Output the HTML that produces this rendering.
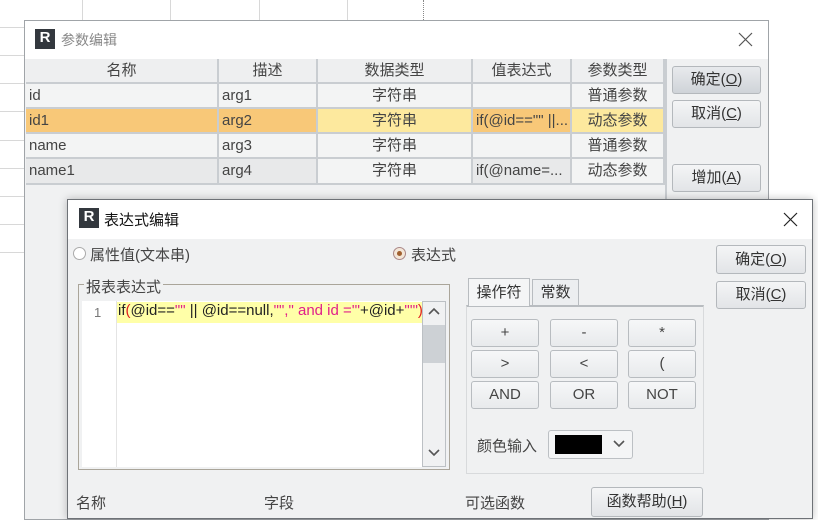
<!DOCTYPE html>
<html><head><meta charset="utf-8"><style>
*{box-sizing:border-box;margin:0;padding:0}
body{width:818px;height:516px;overflow:hidden;background:#fff;position:relative;font-family:"Liberation Sans","Noto Sans CJK SC",sans-serif;font-size:14px;color:#333}
.a{position:absolute}
.vl{position:absolute;top:0;width:1px;height:20px;background:#d8d8d8}
.hl{position:absolute;left:0;width:25px;height:1px;background:#d8d8d8}
.btn{position:absolute;border:1px solid #b4b8bc;border-radius:3px;background:linear-gradient(#f4f5f6,#e2e4e7);text-align:center;color:#333;font-size:15px}
.cell{position:absolute;border-right:2px solid #c9cdd1;border-bottom:2px solid #c9cdd1;padding-left:3px;white-space:nowrap;overflow:hidden;line-height:23px;color:#444;font-size:15px}
.c{text-align:center;padding-left:0}
.ob{position:absolute;width:68px;height:28px;border:1px solid #b8bcc0;border-radius:3px;background:linear-gradient(#f6f7f8,#e8eaec);text-align:center;line-height:26px;color:#444;font-size:15px}
u{text-decoration:underline}
</style></head><body>
<div class="vl" style="left:82px"></div><div class="vl" style="left:170px"></div><div class="vl" style="left:259px"></div><div class="vl" style="left:347px"></div>
<div class="a" style="left:423px;top:0;height:20px;border-left:1px dotted #888"></div>
<div class="hl" style="top:27px"></div><div class="hl" style="top:55px"></div><div class="hl" style="top:83px"></div><div class="hl" style="top:111px"></div><div class="hl" style="top:140px"></div><div class="hl" style="top:168px"></div><div class="hl" style="top:196px"></div><div class="hl" style="top:224px"></div><div class="hl" style="top:252px"></div>

<!-- dialog 1 -->
<div class="a" style="left:24px;top:20px;width:745px;height:500px;border:1px solid #a0a4a8;background:#f0f1f2"></div>
<div class="a" style="left:25px;top:21px;width:743px;height:38px;background:#fff"></div>
<div class="a" style="left:35px;top:29px;width:20px;height:20px;background:#33383e;color:#fff;font-weight:bold;font-size:15px;line-height:18px;text-align:center">R</div>
<div class="a" style="left:61px;top:30px;color:#888;font-size:14px">参数编辑</div>
<svg class="a" style="left:738px;top:32px" width="15" height="15"><path d="M1 1L14 14M14 1L1 14" stroke="#555" stroke-width="1.2"/></svg>
<div class="a" style="left:26px;top:59px;width:639px;height:126px;background:#f3f4f4"></div>
<div class="cell c" style="left:26px;top:59px;width:193px;height:25px;background:#eeeff0">名称</div>
<div class="cell c" style="left:219px;top:59px;width:99px;height:25px;background:#eeeff0">描述</div>
<div class="cell c" style="left:318px;top:59px;width:155px;height:25px;background:#eeeff0">数据类型</div>
<div class="cell c" style="left:473px;top:59px;width:99px;height:25px;background:#eeeff0">值表达式</div>
<div class="cell c" style="left:572px;top:59px;width:93px;height:25px;background:#eeeff0">参数类型</div>

<div class="cell" style="left:26px;top:84px;width:193px;height:25px">id</div>
<div class="cell" style="left:219px;top:84px;width:99px;height:25px">arg1</div>
<div class="cell c" style="left:318px;top:84px;width:155px;height:25px">字符串</div>
<div class="cell" style="left:473px;top:84px;width:99px;height:25px"></div>
<div class="cell c" style="left:572px;top:84px;width:93px;height:25px">普通参数</div>

<div class="cell" style="left:26px;top:109px;width:193px;height:25px;background:#f8c878">id1</div>
<div class="cell" style="left:219px;top:109px;width:99px;height:25px;background:#f8c878">arg2</div>
<div class="cell c" style="left:318px;top:109px;width:155px;height:25px;background:#fde99e">字符串</div>
<div class="cell" style="left:473px;top:109px;width:99px;height:25px;background:#f8c878">if(@id=="" ||...</div>
<div class="cell c" style="left:572px;top:109px;width:93px;height:25px;background:#fde99e">动态参数</div>

<div class="cell" style="left:26px;top:134px;width:193px;height:25px">name</div>
<div class="cell" style="left:219px;top:134px;width:99px;height:25px">arg3</div>
<div class="cell c" style="left:318px;top:134px;width:155px;height:25px">字符串</div>
<div class="cell" style="left:473px;top:134px;width:99px;height:25px"></div>
<div class="cell c" style="left:572px;top:134px;width:93px;height:25px">普通参数</div>

<div class="cell" style="left:26px;top:159px;width:193px;height:26px;background:#e8e9ea">name1</div>
<div class="cell" style="left:219px;top:159px;width:99px;height:26px;background:#e8e9ea">arg4</div>
<div class="cell c" style="left:318px;top:159px;width:155px;height:26px">字符串</div>
<div class="cell" style="left:473px;top:159px;width:99px;height:26px;background:#e8e9ea">if(@name=...</div>
<div class="cell c" style="left:572px;top:159px;width:93px;height:26px">动态参数</div>
<div class="a" style="left:665px;top:59px;width:2px;height:460px;background:#c9cdd1"></div>

<div class="btn" style="left:672px;top:66px;width:89px;height:28px;line-height:26px;background:linear-gradient(#e8eaed,#cfd3d8)">确定(<u>O</u>)</div>
<div class="btn" style="left:672px;top:100px;width:89px;height:28px;line-height:26px">取消(<u>C</u>)</div>
<div class="btn" style="left:672px;top:164px;width:89px;height:28px;line-height:26px">增加(<u>A</u>)</div>

<!-- dialog 2 -->
<div class="a" style="left:67px;top:199px;width:746px;height:320px;border:1px solid #6e7277;background:#f0f1f2;box-shadow:0 0 8px rgba(0,0,0,.25)"></div>
<div class="a" style="left:68px;top:200px;width:744px;height:39px;background:#fff"></div>
<div class="a" style="left:79px;top:208px;width:20px;height:20px;background:#33383e;color:#fff;font-weight:bold;font-size:15px;line-height:18px;text-align:center">R</div>
<div class="a" style="left:104px;top:209px;color:#111;font-size:15px">表达式编辑</div>
<svg class="a" style="left:783px;top:212px" width="15" height="15"><path d="M1 1L14 14M14 1L1 14" stroke="#222" stroke-width="1.2"/></svg>

<div class="a" style="left:73px;top:247px;width:13px;height:13px;border:1px solid #aaa;border-radius:50%;background:#fff"></div>
<div class="a" style="left:90px;top:244px;color:#444;font-size:15px">属性值(文本串)</div>
<div class="a" style="left:393px;top:247px;width:13px;height:13px;border:1px solid #a88;border-radius:50%;background:#f3e6d8"></div>
<div class="a" style="left:397px;top:251px;width:5px;height:5px;border-radius:50%;background:#a06030"></div>
<div class="a" style="left:411px;top:244px;color:#444;font-size:15px">表达式</div>

<div class="a" style="left:78px;top:284px;width:372px;height:186px;border:1px solid #aaa59a"></div>
<div class="a" style="left:84px;top:276px;background:#f0f1f2;padding:0 2px;color:#444;font-size:15px">报表表达式</div>
<div class="a" style="left:82px;top:301px;width:340px;height:166px;background:#fff"></div>
<div class="a" style="left:116px;top:301px;width:1px;height:166px;background:#e4e4e4"></div>
<div class="a" style="left:117px;top:302px;width:305px;height:21px;background:#ffffa8"></div>
<div class="a" style="left:94px;top:305px;color:#777;font-size:13px">1</div>
<div class="a" style="left:118px;top:302px;font-size:15px;white-space:nowrap;color:#222">if<span style="color:#e02020">(</span>@id==<span style="color:#e0208a">""</span> || @id==null,<span style="color:#e0208a">"",</span><span style="color:#e0208a">" and id ='"</span>+@id+<span style="color:#e0208a">"'"</span><span style="color:#e02020">)</span></div>
<div class="a" style="left:422px;top:301px;width:24px;height:166px;background:#f0f1f2;border:1px solid #bcc0c4"></div>
<div class="a" style="left:423px;top:325px;width:22px;height:38px;background:#cdd1d5"></div>
<svg class="a" style="left:427px;top:307px" width="14" height="10"><path d="M2 7L7 2L12 7" fill="none" stroke="#555" stroke-width="1.6"/></svg>
<svg class="a" style="left:427px;top:448px" width="14" height="10"><path d="M2 2L7 7L12 2" fill="none" stroke="#555" stroke-width="1.6"/></svg>

<div class="a" style="left:466px;top:305px;width:238px;height:169px;border:1px solid #d8dadc;border-top:2px solid #b8bcc0"></div>
<div class="a" style="left:468px;top:278px;width:62px;height:28px;border:1px solid #b8bcc0;border-bottom:none;background:#f4f5f6;text-align:center;line-height:27px;font-size:15px;color:#333">操作符</div>
<div class="a" style="left:532px;top:279px;width:47px;height:26px;border:1px solid #b8bcc0;border-bottom:none;background:#eceef0;text-align:center;line-height:25px;font-size:15px;color:#333">常数</div>

<div class="ob" style="left:471px;top:319px">+</div><div class="ob" style="left:550px;top:319px">-</div><div class="ob" style="left:628px;top:319px">*</div>
<div class="ob" style="left:471px;top:350px">&gt;</div><div class="ob" style="left:550px;top:350px">&lt;</div><div class="ob" style="left:628px;top:350px">(</div>
<div class="ob" style="left:471px;top:381px">AND</div><div class="ob" style="left:550px;top:381px">OR</div><div class="ob" style="left:628px;top:381px">NOT</div>

<div class="a" style="left:477px;top:435px;font-size:15px;color:#444">颜色输入</div>
<div class="a" style="left:548px;top:430px;width:85px;height:29px;border:1px solid #bcc0c4;border-radius:3px;background:#f4f5f6"></div>
<div class="a" style="left:555px;top:435px;width:47px;height:19px;background:#000"></div>
<svg class="a" style="left:613px;top:440px" width="12" height="8"><path d="M1 1L6 6L11 1" fill="none" stroke="#555" stroke-width="1.6"/></svg>

<div class="btn" style="left:716px;top:245px;width:90px;height:29px;line-height:27px">确定(<u>O</u>)</div>
<div class="btn" style="left:716px;top:281px;width:90px;height:28px;line-height:26px">取消(<u>C</u>)</div>

<div class="a" style="left:76px;top:492px;font-size:15px;color:#444">名称</div>
<div class="a" style="left:264px;top:492px;font-size:15px;color:#444">字段</div>
<div class="a" style="left:465px;top:492px;font-size:15px;color:#444">可选函数</div>
<div class="btn" style="left:591px;top:487px;width:112px;height:30px;line-height:27px">函数帮助(<u>H</u>)</div>
</body></html>
